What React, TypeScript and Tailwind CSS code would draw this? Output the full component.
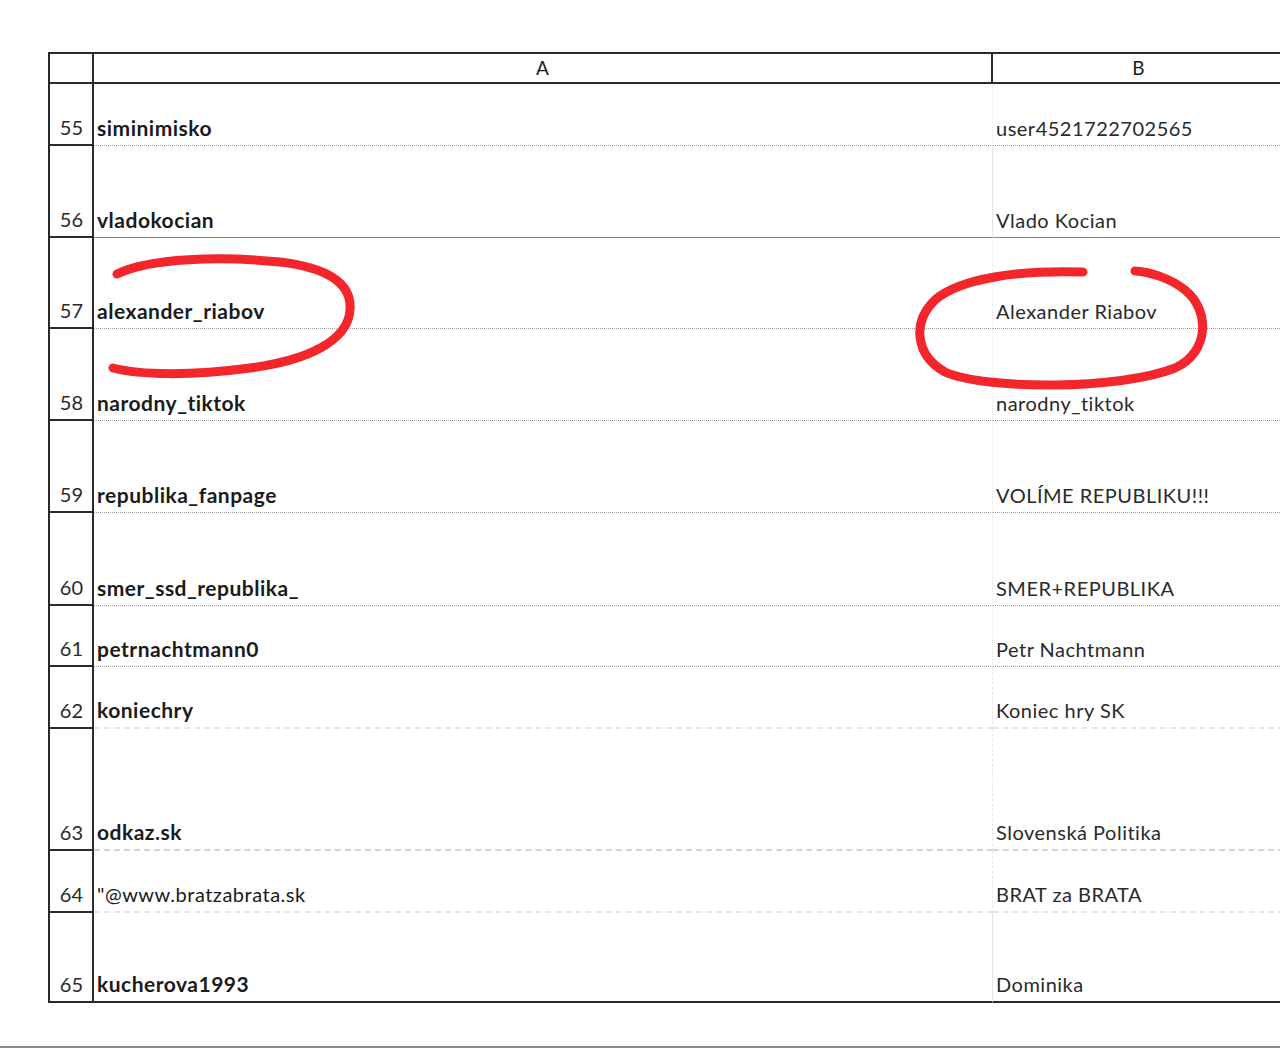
import React from 'react';

type Line = 'dotted' | 'solid' | 'dashed' | 'faint' | 'bottom';

interface Row {
  n: number;
  user: string;
  name: string;
  h: string;
  line: Line;
  bold?: boolean;
}

const rows: Row[] = [
  { n: 55, user: 'siminimisko', name: 'user4521722702565', h: 'h-[62px]', line: 'dotted' },
  { n: 56, user: 'vladokocian', name: 'Vlado Kocian', h: 'h-[92px]', line: 'solid' },
  { n: 57, user: 'alexander_riabov', name: 'Alexander Riabov', h: 'h-[91px]', line: 'dotted' },
  { n: 58, user: 'narodny_tiktok', name: 'narodny_tiktok', h: 'h-[92px]', line: 'dotted' },
  { n: 59, user: 'republika_fanpage', name: 'VOLÍME REPUBLIKU!!!', h: 'h-[92px]', line: 'dotted' },
  { n: 60, user: 'smer_ssd_republika_', name: 'SMER+REPUBLIKA', h: 'h-[93px]', line: 'dotted' },
  { n: 61, user: 'petrnachtmann0', name: 'Petr Nachtmann', h: 'h-[61px]', line: 'dotted' },
  { n: 62, user: 'koniechry', name: 'Koniec hry SK', h: 'h-[62px]', line: 'faint' },
  { n: 63, user: 'odkaz.sk', name: 'Slovenská Politika', h: 'h-[122px]', line: 'dashed' },
  { n: 64, user: '"@www.bratzabrata.sk', name: 'BRAT za BRATA', h: 'h-[62px]', line: 'faint', bold: false },
  { n: 65, user: 'kucherova1993', name: 'Dominika', h: 'h-[90px]', line: 'bottom' },
];

function lineClass(line: Line) {
  switch (line) {
    case 'solid':
      return 'border-b border-solid border-[#8a8a8a]';
    case 'dashed':
      return 'border-b-2 border-dashed border-[#d4d4d4]';
    case 'faint':
      return 'border-b-2 border-dashed border-[#e6e6e6]';
    case 'bottom':
      return 'border-b-2 border-solid border-[#2a2a2a]';
    default:
      return 'border-b border-dotted border-[#9a9a9a]';
  }
}

function Ovals() {
  return (
    <svg className="absolute inset-0 pointer-events-none" width="1280" height="1049" viewBox="0 0 1280 1049">
      <path
        d="M117,274 C150,258 220,256 280,262 C330,268 352,285 350,310 C348,340 310,360 250,368 C190,376 140,375 113,368"
        fill="none"
        stroke="#f2262b"
        strokeWidth={9}
        strokeLinecap="round"
      />
      <path
        d="M1083,272 C1020,270 960,278 935,300 C912,322 915,355 945,372 C985,390 1120,390 1175,368 C1210,352 1210,310 1185,290 C1170,278 1150,272 1135,271"
        fill="none"
        stroke="#f2262b"
        strokeWidth={9}
        strokeLinecap="round"
      />
    </svg>
  );
}

export default function App() {
  return (
    <div className="relative w-[1280px] h-[1049px] overflow-hidden bg-white text-[#1b1b1b] font-['Lato',sans-serif]">
      <div className="pt-[52px] pl-[48px]">
        <div className="w-[1236px] border-l-2 border-[#2a2a2a]">
          {/* header */}
          <div className="grid grid-cols-[44px_899px_1fr] h-[32px] border-y-2 border-[#2a2a2a] text-[19px] leading-[28px]">
            <div className="border-r-2 border-[#2a2a2a]" />
            <div className="border-r-2 border-[#2a2a2a] text-center">A</div>
            <div className="text-center">B</div>
          </div>

          {rows.map((r) => (
            <div key={r.n} className={`grid grid-cols-[44px_899px_1fr] ${r.h}`}>
              <div className="flex items-end justify-end pr-[9px] pb-[5px] border-r-2 border-b-2 border-[#2a2a2a] text-[20px] leading-[24px] text-[#2a2a2a]">
                {r.n}
              </div>
              <div
                className={`flex items-end pl-[3px] pb-[5px] border-r border-r-[#e6e6e6] ${lineClass(r.line)} leading-[24px] ${
                  r.bold === false ? 'font-normal text-[20px] tracking-[0.5px]' : 'font-bold text-[21px] tracking-[0.5px]'
                }`}
              >
                {r.user}
              </div>
              <div className={`flex items-end pl-[3px] pb-[5px] ${lineClass(r.line)} text-[20px] leading-[24px] tracking-[0.5px] text-[#2a2a2a]`}>
                {r.name}
              </div>
            </div>
          ))}
        </div>
      </div>
      <div className="absolute left-0 right-0 top-[1046px] h-[2px] bg-[#8c8c8c]" />
      <Ovals />
    </div>
  );
}
